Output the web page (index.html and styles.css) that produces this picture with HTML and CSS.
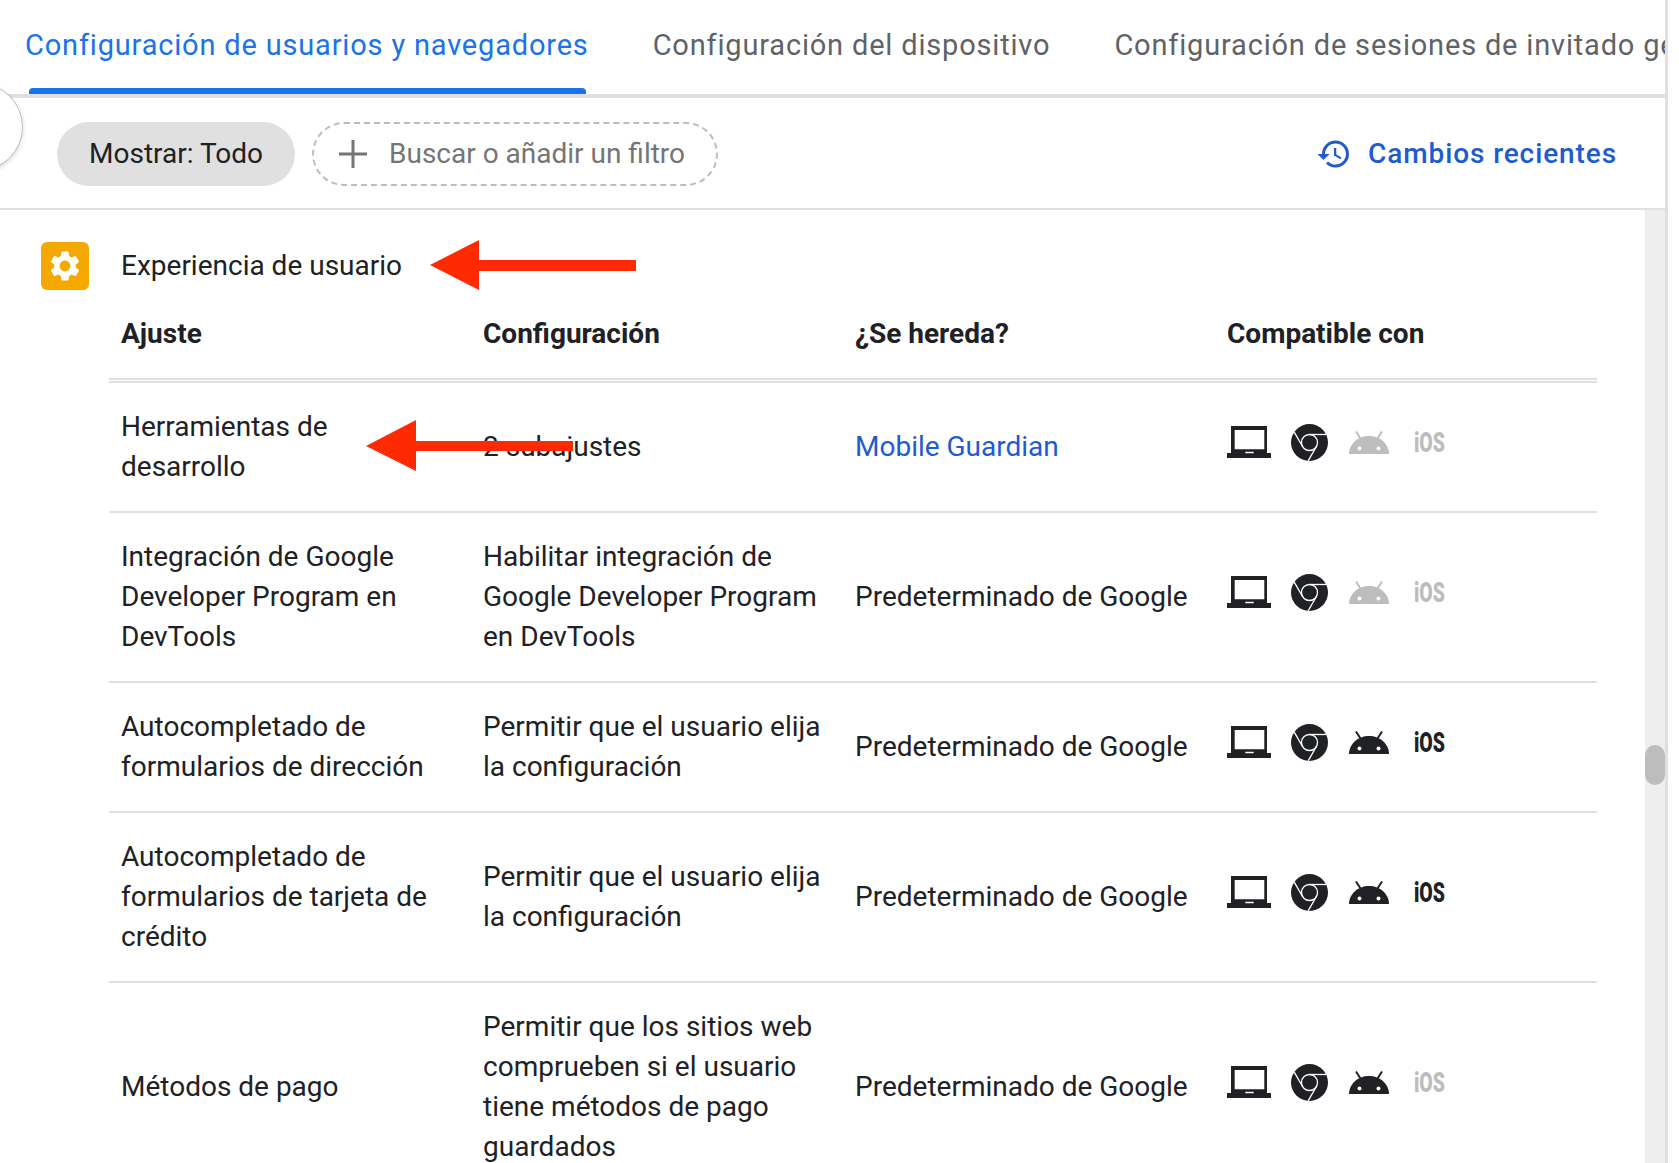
FILE: index.html
```html
<!DOCTYPE html>
<html lang="es">
<head>
    <meta charset="UTF-8">
    <meta name="viewport" content="width=device-width, initial-scale=1.0">
    <title>Configuración de usuarios y navegadores</title>
    <link rel="stylesheet" href="styles.css">
</head>
<body>
<svg class="defs" width="0" height="0">
    <symbol id="laptop" viewBox="0 0 44 32">
        <path fill-rule="evenodd" d="M4 0h36v27h4v5H0v-5h4zM7.7 4v19.3h29.6V4zM18.3 25.7v1.6h8.4v-1.6z"/>
    </symbol>
    <symbol id="chrome" viewBox="0 0 24 24">
        <circle cx="12" cy="12" r="12" fill="currentColor"/>
        <g fill="none" stroke="#fff" stroke-width=".85">
            <circle cx="12" cy="12" r="5.2"/>
            <path d="M12 6.8h10.8"/>
            <path d="M12 6.8h10.8" transform="rotate(120 12 12)"/>
            <path d="M12 6.8h10.8" transform="rotate(240 12 12)"/>
        </g>
    </symbol>
    <symbol id="android" viewBox="0 0 40 23">
        <path d="M0 23C0 13 9 5 20 5s20 8 20 18z"/>
        <path d="M7 .5l4.5 7M33 .5l-4.5 7" fill="none" stroke="currentColor" stroke-width="2"/>
        <circle cx="10.5" cy="17.5" r="2" fill="#fff"/>
        <circle cx="29.5" cy="17.5" r="2" fill="#fff"/>
    </symbol>
</svg>

<div class="frame">
    <nav class="tabs">
        <div class="tab active">Configuración de usuarios y navegadores</div>
        <div class="tab">Configuración del dispositivo</div>
        <div class="tab">Configuración de sesiones de invitado gestionadas</div>
    </nav>

    <div class="toolbar">
        <div class="round-btn"></div>
        <div class="chip">Mostrar: Todo</div>
        <div class="search">
            <svg class="plus" viewBox="0 0 28 28"><path d="M12.5 0h3v12.5H28v3H15.5V28h-3V15.5H0v-3h12.5z"/></svg>
            <span>Buscar o añadir un filtro</span>
        </div>
        <a class="recent">
            <svg class="history" viewBox="0 0 24 24"><path d="M13 3a9 9 0 0 0-9 9H1l3.89 3.89.07.14L9 12H6c0-3.87 3.13-7 7-7s7 3.13 7 7-3.13 7-7 7c-1.93 0-3.68-.79-4.94-2.06l-1.42 1.42A8.954 8.954 0 0 0 13 21a9 9 0 0 0 0-18zm-1 5v5l4.28 2.54.72-1.21-3.5-2.08V8H12z"/></svg>
            Cambios recientes
        </a>
    </div>

    <div class="body">
        <main class="content">
            <div class="section-head">
                <div class="tile">
                    <svg viewBox="0 0 24 24"><path d="M19.14 12.94c.04-.3.06-.61.06-.94 0-.32-.02-.64-.07-.94l2.03-1.58c.18-.14.23-.41.12-.61l-1.92-3.32c-.12-.22-.37-.29-.59-.22l-2.39.96c-.5-.38-1.03-.7-1.62-.94l-.36-2.54c-.04-.24-.24-.41-.48-.41h-3.84c-.24 0-.43.17-.47.41l-.36 2.54c-.59.24-1.13.57-1.62.94l-2.39-.96c-.22-.08-.47 0-.59.22L2.74 8.87c-.12.21-.08.47.12.61l2.03 1.58c-.05.3-.09.63-.09.94s.02.64.07.94l-2.03 1.58c-.18.14-.23.41-.12.61l1.92 3.32c.12.22.37.29.59.22l2.39-.96c.5.38 1.03.7 1.62.94l.36 2.54c.05.24.24.41.48.41h3.84c.24 0 .44-.17.47-.41l.36-2.54c.59-.24 1.13-.56 1.62-.94l2.39.96c.22.08.47 0 .59-.22l1.92-3.32c.12-.22.07-.47-.12-.61l-2.01-1.58zM12 15.6c-1.98 0-3.6-1.62-3.6-3.6s1.62-3.6 3.6-3.6 3.6 1.62 3.6 3.6-1.62 3.6-3.6 3.6z"/></svg>
                </div>
                <div class="section-title">Experiencia de usuario</div>
            </div>

            <div class="table">
                <div class="row head">
                    <div class="cell">Ajuste</div>
                    <div class="cell">Configuración</div>
                    <div class="cell">¿Se hereda?</div>
                    <div class="cell">Compatible con</div>
                </div>

                <div class="row">
                    <div class="cell">Herramientas de desarrollo</div>
                    <div class="cell">2 subajustes</div>
                    <div class="cell link">Mobile Guardian</div>
                    <div class="cell">
                        <div class="platforms">
                            <span class="slot"><svg class="ic-laptop"><use href="#laptop"/></svg></span>
                            <span class="slot"><svg class="ic-chrome"><use href="#chrome"/></svg></span>
                            <span class="slot off"><svg class="ic-android"><use href="#android"/></svg></span>
                            <span class="slot off"><span class="ios">iOS</span></span>
                        </div>
                    </div>
                </div>

                <div class="row">
                    <div class="cell">Integración de Google Developer Program en DevTools</div>
                    <div class="cell">Habilitar integración de Google Developer Program en DevTools</div>
                    <div class="cell">Predeterminado de Google</div>
                    <div class="cell">
                        <div class="platforms">
                            <span class="slot"><svg class="ic-laptop"><use href="#laptop"/></svg></span>
                            <span class="slot"><svg class="ic-chrome"><use href="#chrome"/></svg></span>
                            <span class="slot off"><svg class="ic-android"><use href="#android"/></svg></span>
                            <span class="slot off"><span class="ios">iOS</span></span>
                        </div>
                    </div>
                </div>

                <div class="row">
                    <div class="cell">Autocompletado de formularios de dirección</div>
                    <div class="cell">Permitir que el usuario elija la configuración</div>
                    <div class="cell">Predeterminado de Google</div>
                    <div class="cell">
                        <div class="platforms">
                            <span class="slot"><svg class="ic-laptop"><use href="#laptop"/></svg></span>
                            <span class="slot"><svg class="ic-chrome"><use href="#chrome"/></svg></span>
                            <span class="slot"><svg class="ic-android"><use href="#android"/></svg></span>
                            <span class="slot"><span class="ios">iOS</span></span>
                        </div>
                    </div>
                </div>

                <div class="row">
                    <div class="cell">Autocompletado de formularios de tarjeta de crédito</div>
                    <div class="cell">Permitir que el usuario elija la configuración</div>
                    <div class="cell">Predeterminado de Google</div>
                    <div class="cell">
                        <div class="platforms">
                            <span class="slot"><svg class="ic-laptop"><use href="#laptop"/></svg></span>
                            <span class="slot"><svg class="ic-chrome"><use href="#chrome"/></svg></span>
                            <span class="slot"><svg class="ic-android"><use href="#android"/></svg></span>
                            <span class="slot"><span class="ios">iOS</span></span>
                        </div>
                    </div>
                </div>

                <div class="row">
                    <div class="cell">Métodos de pago</div>
                    <div class="cell">Permitir que los sitios web comprueben si el usuario tiene métodos de pago guardados</div>
                    <div class="cell">Predeterminado de Google</div>
                    <div class="cell">
                        <div class="platforms">
                            <span class="slot"><svg class="ic-laptop"><use href="#laptop"/></svg></span>
                            <span class="slot"><svg class="ic-chrome"><use href="#chrome"/></svg></span>
                            <span class="slot"><svg class="ic-android"><use href="#android"/></svg></span>
                            <span class="slot off"><span class="ios">iOS</span></span>
                        </div>
                    </div>
                </div>
            </div>
        </main>
        <div class="scrollbar"><div class="thumb"></div></div>
    </div>

    <!-- red annotation arrows over the page -->
    <svg class="arrow arrow-one" viewBox="0 0 206 50"><path d="M0 25L49 0v20h157v11H49v19z"/></svg>
    <svg class="arrow arrow-two" viewBox="0 0 207 51"><path d="M0 26L50 0v21h157v10H50v20z"/></svg>
</div>
</body>
</html>
```

FILE: styles.css
```css
*{
    margin: 0;
    padding: 0;
    box-sizing: border-box;
}
html,body{
    height: 100%;
    overflow: hidden;
    background-color: #fff;
}
body{
    font-family: Roboto, "Liberation Sans", sans-serif;
    font-size: 28px;
    line-height: 40px;
    color: #202124;
}
.defs{
    position: absolute;
}
.frame{
    position: relative;
    width: 1668px;
    height: 100%;
    border-right: 3px solid #e0e0e0;
    display: flex;
    flex-direction: column;
    overflow: hidden;
}

/* tabs */
.tabs{
    display: flex;
    flex: none;
    gap: 64px;
    height: 98px;
    padding-left: 25px;
    border-bottom: 4px solid #e0e0e0;
    white-space: nowrap;
    overflow: hidden;
}
.tab{
    position: relative;
    flex: none;
    font-size: 29px;
    line-height: 90px;
    letter-spacing: .82px;
    color: #5f6368;
}
.tab.active{
    color: #1a73e8;
}
.tab.active::after{
    content: "";
    position: absolute;
    left: 4px;
    right: 3px;
    bottom: 0;
    height: 6px;
    background-color: #1a73e8;
    border-radius: 4px 4px 0 0;
}

/* toolbar */
.toolbar{
    display: flex;
    flex: none;
    align-items: center;
    height: 112px;
    padding: 2px 48px 0 57px;
    border-bottom: 2px solid #e0e0e0;
}
.round-btn{
    position: absolute;
    left: -65px;
    top: 83px;
    width: 88px;
    height: 88px;
    background-color: #fff;
    border: 1px solid #bdbdbd;
    border-radius: 50%;
    box-shadow: 0 2px 4px rgba(0,0,0,.15);
}
.chip{
    width: 238px;
    height: 64px;
    line-height: 64px;
    text-align: center;
    background-color: #e0e0e0;
    border-radius: 32px;
}
.search{
    display: flex;
    align-items: center;
    width: 406px;
    height: 64px;
    margin-left: 17px;
    padding-left: 25px;
    border: 2px dashed #bdbdbd;
    border-radius: 32px;
    color: #757575;
}
.plus{
    width: 28px;
    height: 28px;
    margin-right: 22px;
    fill: #757575;
}
.recent{
    display: flex;
    align-items: center;
    margin-left: auto;
    font-weight: 500;
    letter-spacing: .9px;
    color: #1f5bd0;
}
.history{
    width: 36px;
    height: 36px;
    margin-right: 16px;
    fill: #1f5bd0;
}

/* main area */
.body{
    display: flex;
    flex: 1;
    min-height: 0;
}
.content{
    flex: 1;
    min-width: 0;
    padding-top: 32px;
}
.scrollbar{
    position: relative;
    flex: none;
    width: 20px;
    background-color: #eeeeee;
}
.thumb{
    position: absolute;
    top: 535px;
    left: 0;
    width: 20px;
    height: 40px;
    background-color: #bdbdbd;
    border-radius: 10px;
}
.section-head{
    display: flex;
    align-items: center;
    padding-left: 41px;
}
.tile{
    display: flex;
    align-items: center;
    justify-content: center;
    width: 48px;
    height: 48px;
    margin-right: 32px;
    background-color: #f4a800;
    border-radius: 6px;
}
.tile svg{
    width: 36px;
    height: 36px;
    fill: #fff;
}

/* table */
.table{
    width: 1488px;
    margin-left: 109px;
}
.row{
    display: grid;
    grid-template-columns: 362px 372px 372px 1fr;
    align-items: center;
    border-bottom: 2px solid #e0e0e0;
}
.row.head{
    height: 93px;
    border-bottom: 5px double #e0e0e0;
    font-weight: 700;
}
.cell{
    padding: 24px 12px;
}
.head .cell{
    padding-top: 0;
    padding-bottom: 0;
}
.link{
    color: #1f5bd0;
}
.platforms{
    display: flex;
    margin: 0 0 10px -8px;
    color: #202124;
}
.slot{
    display: flex;
    align-items: center;
    justify-content: center;
    width: 60px;
    height: 40px;
    fill: currentColor;
}
.slot.off{
    color: #bdbdbd;
}
.ic-laptop{
    width: 44px;
    height: 32px;
}
.ic-chrome{
    width: 37px;
    height: 37px;
}
.ic-android{
    width: 40px;
    height: 23px;
}
.ios{
    font-size: 27px;
    font-weight: 900;
    transform: translateY(1px) scaleX(.72);
}

/* annotation arrows */
.arrow{
    position: absolute;
    fill: #ff2a00;
}
.arrow-one{
    left: 430px;
    top: 240px;
    width: 206px;
    height: 50px;
}
.arrow-two{
    left: 366px;
    top: 420px;
    width: 207px;
    height: 51px;
}
```
